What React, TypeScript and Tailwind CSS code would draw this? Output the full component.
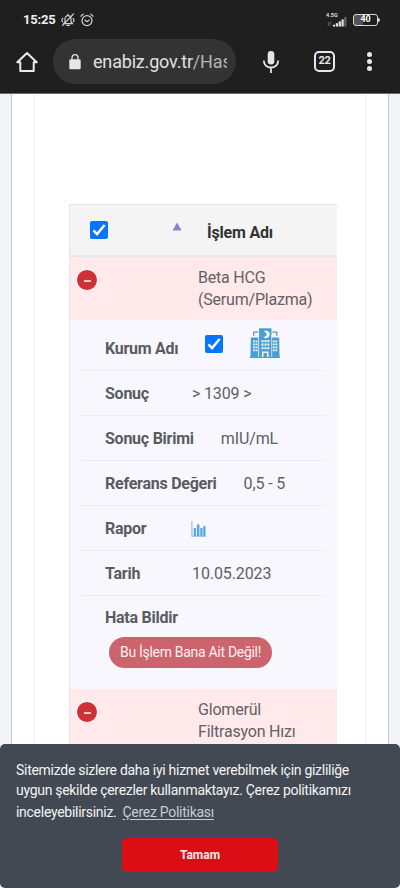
import type { ReactNode } from 'react';
import { clsx } from 'clsx';

const BellOffIcon = () => (
  <svg width="14" height="14" viewBox="0 0 14 14" fill="none" stroke="#cfcfcf" strokeWidth="1.2">
    <path d="M2.800 10.600h8.600L10 9V6C10 4 8.800 2.700 7 2.700S4 4 4 6v3z" />
    <path d="M5.800 12.300h2.600M7 1.200v1.300M12.400 1L1.400 12.600" strokeLinecap="round" />
    <path d="M1.900 4.800L.8 7.200l1 2M12 5l1.100 2.200-1 2" />
  </svg>
);

const AlarmIcon = () => (
  <svg width="14" height="14" viewBox="0 0 14 14" fill="none" stroke="#d4d4d4" strokeWidth="1.2" strokeLinecap="round">
    <circle cx="7" cy="7.600" r="5" />
    <path d="M.9 3.200L3.200 1.100M13.100 3.200L10.800 1.100M4.900 7.100L7 8.700l2.200-1.600" />
  </svg>
);

const HomeIcon = () => (
  <svg width="22" height="22" viewBox="0 0 22 22" fill="none" stroke="#ececec" strokeWidth="2">
    <path d="M1.300 11.200L11 2l9.700 9.200h-3V20H4.300v-8.800z" strokeLinejoin="round" />
  </svg>
);

const LockIcon = () => (
  <svg width="12" height="16" viewBox="0 0 12 16">
    <rect x=".3" y="5.300" width="11.400" height="10" rx="1.300" fill="#e6e6e6" />
    <path d="M3 5.500V3.700a3 3 0 0 1 6 0v1.800" fill="none" stroke="#e6e6e6" strokeWidth="1.300" />
  </svg>
);

const MicIcon = () => (
  <svg width="18" height="24" viewBox="0 0 18 24">
    <rect x="5.700" y="1" width="6.600" height="13.500" rx="3.300" fill="#e4e4e4" />
    <path d="M1.800 10.500c0 4.200 3.100 7 7.200 7s7.200-2.800 7.200-7M9 17.500V23" fill="none" stroke="#e4e4e4" strokeWidth="1.800" />
  </svg>
);

const SignalIcon = () => (
  <svg width="22" height="11" viewBox="0 0 22 11">
    <path d="M1.700 5.500v4M.8 8.300l.9 1.200M3.700 9.500v-4l.9 1.200" stroke="#777" strokeWidth=".7" fill="none" />
    <g fill="#dedede">
      <rect x="6.500" y="8.500" width="2.500" height="2" />
      <rect x="9.700" y="6.800" width="2.500" height="3.700" />
      <rect x="12.800" y="4.800" width="2.500" height="5.700" />
      <rect x="15.900" y="2.600" width="2.500" height="7.900" />
    </g>
    <rect x="19" y="0" width="2.300" height="10.500" fill="#666" />
  </svg>
);

const HospitalIcon = () => (
  <svg width="30" height="30" viewBox="0 0 30 30">
    <g fill="#4a9fd0">
      <path d="M.8 9.500h8V29H.5zM21.200 9.500h8L29.500 29h-8.300z" />
      <rect x="9" y=".3" width="12.500" height="28.700" />
      <rect x="0" y="28.500" width="30" height="1.500" />
    </g>
    <path d="M8 4.200H3.700v3.500M22.500 4.200h4.300v3.500" fill="none" stroke="#6b8ea5" strokeWidth="1.300" />
    <path d="M8.600 7v22M21.700 7v22" stroke="#f7f7fd" strokeWidth=".7" />
    {/* Crescent */}
    <path d="M13.700 3.300a3.700 3.700 0 1 1-.6 5.400c4.200.9 5.200-3.400.6-5.400z" fill="#fff" />
    <g fill="#e8f4fb">
      <path d="M11.500 12h2v2.200h-2zM14.500 12h2v2.200h-2zM17.400 12h2v2.200h-2zM11.500 15.500h2v2.200h-2zM14.500 15.500h2v2.200h-2zM17.400 15.500h2v2.200h-2zM11.500 19h2v2.200h-2zM14.500 19h2v2.200h-2zM17.400 19h2v2.200h-2z" />
      <path d="M3 12.500h4.500v1.800H3zM3 15.500h4.500v1.800H3zM3 18.500h4.500v1.800H3zM3 21.500h4.500v1.800H3zM22.800 12.500h4.500v1.800h-4.500zM22.800 15.500h4.500v1.800h-4.500zM22.800 18.500h4.500v1.800h-4.500zM22.800 21.500h4.500v1.800h-4.500z" />
      <path d="M12 23.500h6.500V29H17v-4h-3.500v4H12z" />
    </g>
    <path d="M5.300 12v12M25 12v12" stroke="#4a9fd0" strokeWidth=".6" />
  </svg>
);

const ReportIcon = () => (
  <svg width="16" height="16" viewBox="0 0 16 16">
    <path d="M.9 0v15.200H15.500" fill="none" stroke="#7fbfe8" strokeWidth="1.100" />
    <g fill="#55a7e2">
      <rect x="2.700" y="7" width="2.200" height="8" />
      <rect x="5.900" y="3.500" width="2.500" height="11.500" />
      <rect x="9.300" y="7" width="2.200" height="8" />
      <rect x="12.200" y="5.200" width="2.300" height="9.800" />
    </g>
  </svg>
);

const Checkbox = () => (
  <span className="flex h-[18px] w-[18px] shrink-0 items-center justify-center rounded-[2px] bg-[#0675fb]">
    <svg width="18" height="18" viewBox="0 0 18 18" fill="none" stroke="#fff" strokeWidth="2.400">
      <path d="M3.400 9.300l3.700 3.800 7.500-9" />
    </svg>
  </span>
);

const CollapseButton = () => (
  <button
    aria-label="Kapat"
    className="flex h-[22px] w-[22px] items-center justify-center rounded-full border-[1.5px] border-white bg-[#d13034] shadow-[0_0_2px_#fff]"
  >
    <span className="mt-[2px] h-[2px] w-[7px] bg-[#f6c9ca]" />
  </button>
);

type Row = { label: string; value: ReactNode; gap: string; height: string };

const rows: Row[] = [
  {
    label: 'Kurum Adı',
    value: (
      <span className="-mt-[10px] flex items-center gap-[27px]">
        <Checkbox />
        <span className="-mt-[2px]">
          <HospitalIcon />
        </span>
      </span>
    ),
    gap: 'ml-[27px]',
    height: 'h-[51px] pt-[7px]',
  },
  { label: 'Sonuç', value: '> 1309 >', gap: 'ml-[43px]', height: 'h-[45px] pt-[2px]' },
  { label: 'Sonuç Birimi', value: 'mIU/mL', gap: 'ml-[27px]', height: 'h-[45px] pt-[2px]' },
  { label: 'Referans Değeri', value: '0,5 - 5', gap: 'ml-[27px]', height: 'h-[45px] pt-[2px]' },
  { label: 'Rapor', value: <ReportIcon />, gap: 'ml-[45px]', height: 'h-[45px] pt-[2px]' },
  { label: 'Tarih', value: '10.05.2023', gap: 'ml-[52px]', height: 'h-[45px] pt-[2px]' },
];

const ResultRow = ({ lines }: { lines: string[] }) => (
  <div className="flex h-[63px] bg-[#ffe9eb] pt-[10px]">
    <div className="w-[128px] pl-[6px] pt-[2px]">
      <CollapseButton />
    </div>
    <div className="text-[16px] leading-[22px] tracking-[-0.200px] text-[#655f66]">
      {lines.map((line) => (
        <div key={line} className="whitespace-nowrap">
          {line}
        </div>
      ))}
    </div>
  </div>
);

const BrowserBar = () => (
  <header className="h-[94px] shrink-0 border-b border-[#6b6b6b] bg-[#1f1f1f]">
    <div className="flex h-[39px] items-center pl-[23px] pr-[20px]">
      <span className="w-[38px] text-[13px] font-bold tracking-[-0.200px] text-[#ededed]">15:25</span>
      <BellOffIcon />
      <span className="ml-[5px]">
        <AlarmIcon />
      </span>
      <div className="ml-auto flex h-[14px] flex-col">
        <span className="h-[4px] text-[5.500px] font-bold leading-[5px] text-[#dedede]">4.5G</span>
        <SignalIcon />
      </div>
      <div className="ml-[5px] flex items-center">
        <span className="flex h-[12px] w-[25px] items-center justify-center rounded-[3px] border-[1.500px] border-[#d8d8d8] bg-[linear-gradient(90deg,#555_40%,#1f1f1f_40%)] text-[9px] font-bold leading-none tracking-[-0.200px] text-white">
          40
        </span>
        <span className="h-[4px] w-[2px] rounded-r-sm bg-[#d8d8d8]" />
      </div>
    </div>
    <div className="flex h-[45px] items-center">
      <span className="ml-[16px]">
        <HomeIcon />
      </span>
      <div className="ml-[15px] flex h-[45px] w-[183px] items-center rounded-full bg-[#333] pl-[16px]">
        <LockIcon />
        <span className="ml-[12px] w-[134px] overflow-hidden whitespace-nowrap text-[18px] tracking-[-0.180px] text-[#e0e0e0]">
          enabiz.gov.tr<span className="text-[#b5b5b5]">/Has</span>
        </span>
      </div>
      <span className="ml-[26px]">
        <MicIcon />
      </span>
      <span className="ml-[34px] flex h-[21px] w-[21px] items-center justify-center rounded-[5px] border-2 border-[#e8e8e8] text-[11px] font-bold tracking-[-0.300px] text-[#e8e8e8]">
        22
      </span>
      <span className="ml-[32px] flex flex-col gap-[2.500px]">
        <i className="h-[4.500px] w-[4.500px] rounded-full bg-[#e8e8e8]" />
        <i className="h-[4.500px] w-[4.500px] rounded-full bg-[#e8e8e8]" />
        <i className="h-[4.500px] w-[4.500px] rounded-full bg-[#e8e8e8]" />
      </span>
    </div>
  </header>
);

const CookieBanner = () => (
  <div className="absolute inset-x-0 bottom-0 h-[144px] rounded-[5px] bg-[#424953] px-4 pt-[16px] text-[14px] tracking-[-0.280px] text-[#f3f3f4]">
    <p className="whitespace-nowrap leading-[20px]">Sitemizde sizlere daha iyi hizmet verebilmek için gizliliğe</p>
    <p className="whitespace-nowrap leading-[20px] tracking-[-0.300px]">
      uygun şekilde çerezler kullanmaktayız. Çerez politikamızı
    </p>
    <p className="whitespace-nowrap leading-[25px]">
      inceleyebilirsiniz.
      <a className="ml-[6px] text-[#c8cbcf] underline underline-offset-2">Çerez Politikası</a>
    </p>
    <button className="mx-auto mt-[13px] block h-[34px] w-[156px] rounded-[5px] bg-[#db0d15] text-[12px] font-bold tracking-normal text-[#fde9e9]">
      Tamam
    </button>
  </div>
);

export default function App() {
  return (
    <div className="relative flex h-[888px] w-[400px] flex-col overflow-hidden bg-[#f3f4f9] font-['Roboto',sans-serif]">
      <BrowserBar />
      <main className="mx-[11px] flex-1 border-x border-[#c9cacd] bg-white px-[22px]">
        <div className="h-full border-x border-[#f1f1f3] pt-[110px] pl-[34px] pr-[28px]">
          <div className="w-[268px] border-l border-t border-[#e6e6ea]">
            {/* Table head */}
            <div className="flex h-[52px] items-center border-b-2 border-[#e8e8ec] bg-[#f4f4f4]">
              <span className="ml-[20px]">
                <Checkbox />
              </span>
              <svg className="ml-[64px] -mt-[8px]" width="10" height="9" viewBox="0 0 10 9">
                <path d="M5 .4L9.500 8.400H.5z" fill="#8583d3" />
              </svg>
              <span className="ml-[25px] mt-[6px] text-[16px] font-bold tracking-[-0.200px] text-[#333]">İşlem Adı</span>
            </div>

            <ResultRow lines={['Beta HCG', '(Serum/Plazma)']} />

            {/* Expanded details */}
            <div className="h-[369px] bg-[#f7f7fd] px-[11px] text-[16px] tracking-[-0.120px] text-[#5f6067]">
              {rows.map((row) => (
                <div
                  key={row.label}
                  className={clsx('flex items-center whitespace-nowrap border-b border-[#ebebf0] pl-[24px]', row.height)}
                >
                  <b className="font-bold tracking-[-0.250px] text-[#5a5b62]">{row.label}</b>
                  <span className={row.gap}>{row.value}</span>
                </div>
              ))}
              <div className="pl-[24px] pt-[10px]">
                <b className="block leading-[24px] tracking-[-0.250px] text-[#5a5b62]">Hata Bildir</b>
                <button className="ml-[4px] mt-[7px] h-[31px] w-[163px] whitespace-nowrap rounded-full bg-[#cb646c] text-[14px] tracking-[-0.300px] text-[#fff1f1]">
                  Bu İşlem Bana Ait Değil!
                </button>
              </div>
            </div>

            <ResultRow lines={['Glomerül', 'Filtrasyon Hızı']} />
          </div>
        </div>
      </main>
      <CookieBanner />
    </div>
  );
}
